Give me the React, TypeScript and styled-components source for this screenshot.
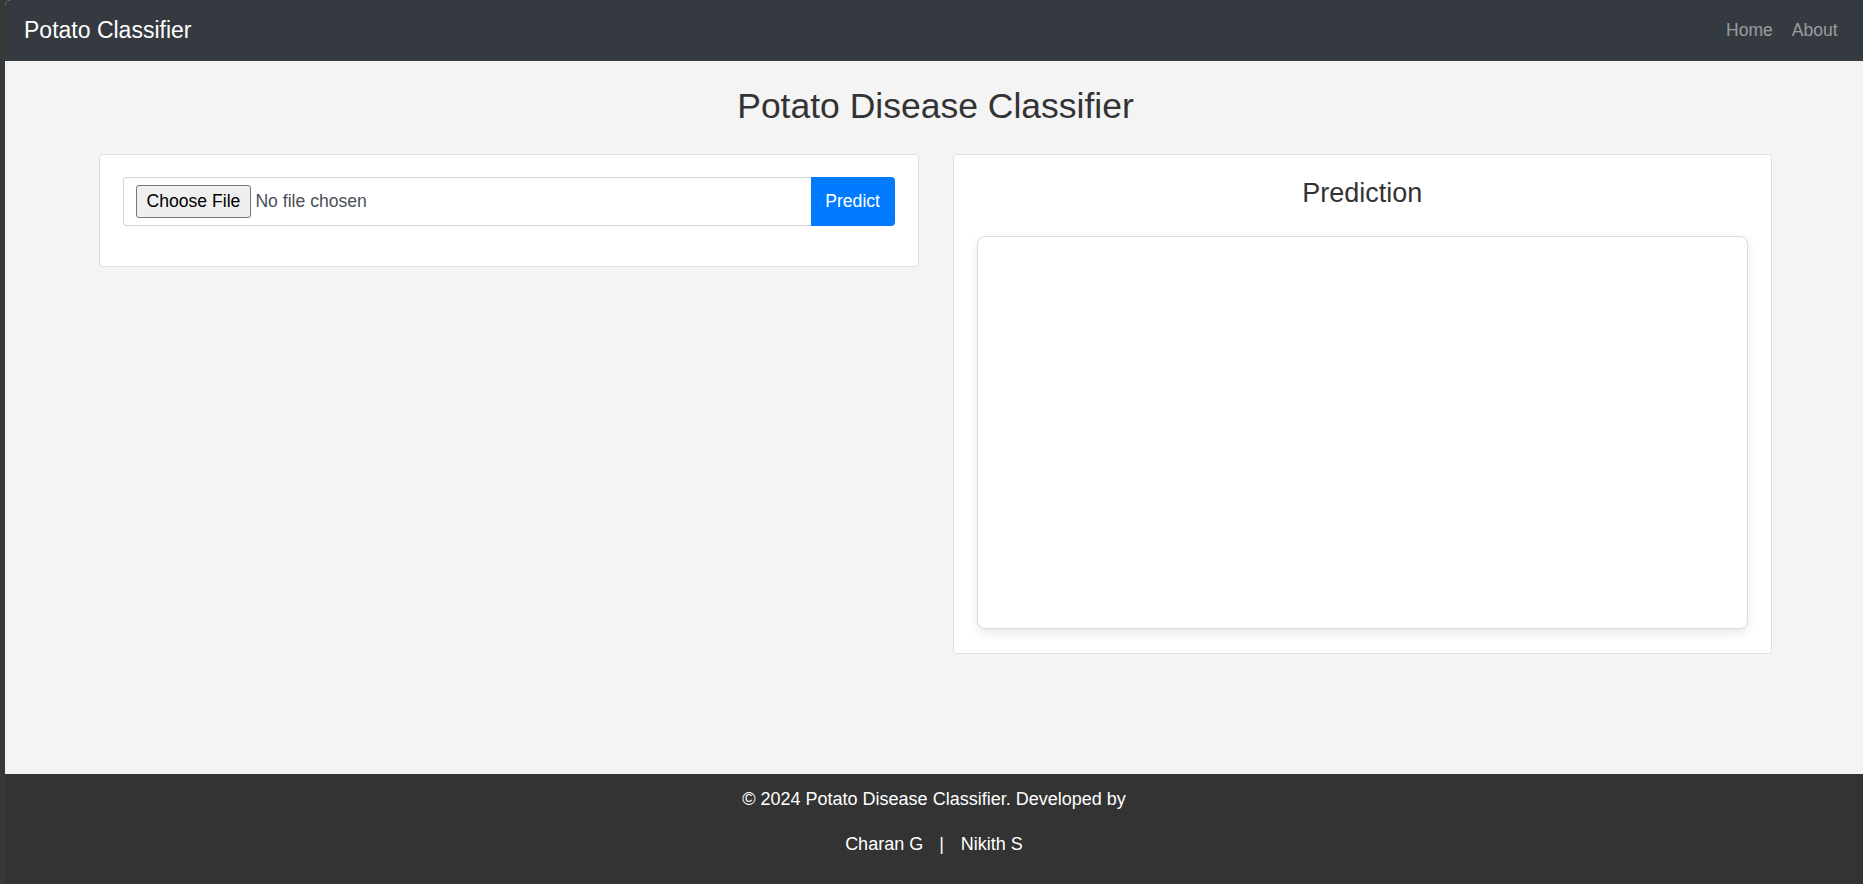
import React from "react";
import styled, { createGlobalStyle } from "styled-components";

const GlobalStyle = createGlobalStyle`
  html, body {
    margin: 0;
    padding: 0;
    height: 100%;
  }
  body {
    background: #383838;
    font-family: "Liberation Sans", Arial, sans-serif;
  }
  #root {
    min-height: 100vh;
  }
`;

const Page = styled.div`
  display: flex;
  flex-direction: column;
  min-height: 100vh;
  margin-left: 5px;
  background: #f4f4f4;
  border-top-left-radius: 6px;
  overflow: hidden;
`;

const NavContainer = styled.nav`
  display: flex;
  justify-content: space-between;
  align-items: center;
  height: 61px;
  padding: 0 16px 0 19px;
  background: #343a40;
`;

const Brand = styled.a`
  color: #ffffff;
  font-size: 23px;
  line-height: 1;
  text-decoration: none;
  margin-top: -1px;
`;

const NavLinks = styled.ul`
  display: flex;
  list-style: none;
  margin: 0;
  padding: 0;
`;

const NavLink = styled.a`
  display: block;
  padding: 0 9.5px;
  color: rgba(255, 255, 255, 0.5);
  font-size: 17.5px;
  text-decoration: none;
`;

const Main = styled.main`
  flex: 1;
  padding: 24px 91px 40px 94px;
`;

const Title = styled.h1`
  margin: 0 0 26px;
  text-align: center;
  font-size: 35.5px;
  font-weight: 400;
  line-height: 1.2;
  color: #333333;
`;

const Columns = styled.div`
  display: grid;
  grid-template-columns: 1fr 1fr;
  gap: 34px;
  align-items: start;
`;

const Card = styled.section`
  background: #ffffff;
  border: 1px solid #dfdfdf;
  border-radius: 4px;
  padding: 22px 23px 24px;
`;

const UploadForm = styled.form`
  display: flex;
  margin-bottom: 16px;
`;

const FileField = styled.div`
  flex: 1;
  display: flex;
  align-items: center;
  height: 49px;
  box-sizing: border-box;
  padding: 0 12px;
  border: 1px solid #ced4da;
  border-right: none;
  border-radius: 4px 0 0 4px;
`;

const FileInput = styled.input`
  font-family: "Liberation Sans", Arial, sans-serif;
  font-size: 17.6px;
  color: #495057;

  &::file-selector-button {
    height: 33px;
    margin-right: 4.5px;
    padding: 0 9.5px;
    font-family: "Liberation Sans", Arial, sans-serif;
    font-size: 17.6px;
    color: #000000;
    background: #efefef;
    border: 1px solid #767676;
    border-radius: 3px;
  }
`;

const PredictButton = styled.button`
  height: 49px;
  padding: 0 14.5px;
  border: none;
  border-radius: 0 4px 4px 0;
  background: #007bff;
  color: #ffffff;
  font-family: "Liberation Sans", Arial, sans-serif;
  font-size: 17.6px;
  cursor: pointer;
`;

const CardTitle = styled.h3`
  margin: 0 0 27px;
  text-align: center;
  font-size: 27px;
  font-weight: 400;
  line-height: 1.2;
  color: #333333;
`;

const ResultBox = styled.div`
  height: 393px;
  box-sizing: border-box;
  background: #ffffff;
  border: 1px solid #dcdcdc;
  border-radius: 8px;
  box-shadow: 0 4px 10px rgba(0, 0, 0, 0.1);
`;

const Footer = styled.footer`
  display: flex;
  flex-direction: column;
  align-items: center;
  gap: 18px;
  padding: 12px 0 26px;
  background: #333333;
  color: #ffffff;
  font-size: 18px;
  line-height: 27px;
`;

const FooterLine = styled.p`
  margin: 0;
`;

const Separator = styled.span`
  margin: 0 17px 0 16px;
`;

export default function App() {
  return (
    <>
      <GlobalStyle />
      <Page>
        <NavContainer>
          <Brand href="#">Potato Classifier</Brand>
          <NavLinks>
            <li>
              <NavLink href="#">Home</NavLink>
            </li>
            <li>
              <NavLink href="#">About</NavLink>
            </li>
          </NavLinks>
        </NavContainer>

        <Main>
          <Title>Potato Disease Classifier</Title>
          <Columns>
            <Card>
              <UploadForm onSubmit={(e) => e.preventDefault()}>
                <FileField>
                  <FileInput type="file" accept="image/*" />
                </FileField>
                <PredictButton type="submit">Predict</PredictButton>
              </UploadForm>
            </Card>
            <Card>
              <CardTitle>Prediction</CardTitle>
              <ResultBox />
            </Card>
          </Columns>
        </Main>

        <Footer>
          <FooterLine>© 2024 Potato Disease Classifier. Developed by</FooterLine>
          <FooterLine>
            Charan G<Separator>|</Separator>Nikith S
          </FooterLine>
        </Footer>
      </Page>
    </>
  );
}
